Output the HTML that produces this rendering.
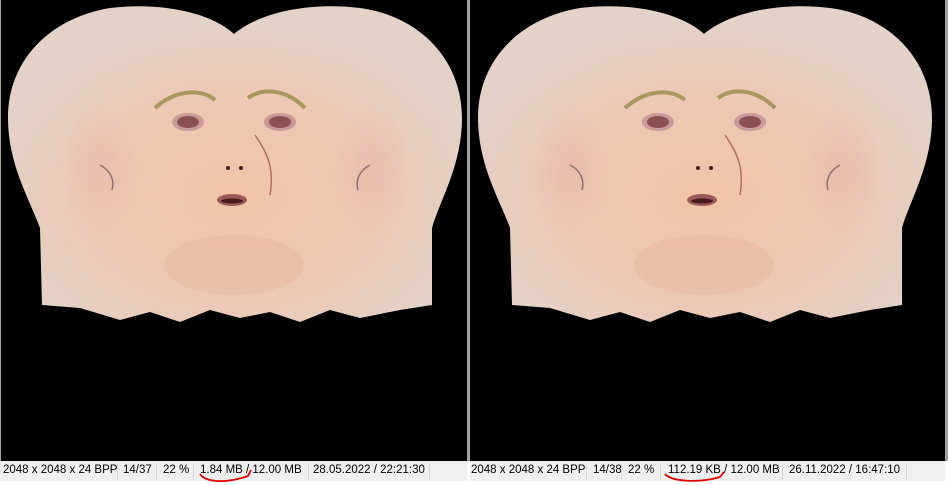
<!DOCTYPE html>
<html><head><meta charset="utf-8"><style>
body{margin:0;width:948px;height:485px;overflow:hidden;background:#fff;position:relative;font-family:"Liberation Sans",sans-serif;}
.panel{position:absolute;top:0;height:461px;background:#000;}
.sb{position:absolute;top:461px;height:20px;background:#f0f0f0;font-size:11.5px;color:#000;}
.sb span{position:absolute;top:3px;white-space:nowrap;}
.sep{position:absolute;top:2px;width:1px;height:17px;background:#d8d8d8;}
</style></head><body>
<div style="position:absolute;left:0;top:0;width:948px;height:461px;background:#a0a0a0"></div>
<div class="panel" style="left:1px;width:466px"></div>
<div class="panel" style="left:470px;width:475px"></div>
<svg width="948" height="461" style="position:absolute;left:0;top:0">
<defs>
<radialGradient id="g" cx="0.5" cy="0.6" r="0.55">
<stop offset="0" stop-color="#f2c4a8"/><stop offset="0.6" stop-color="#edc8b4"/><stop offset="1" stop-color="#e2d2c8"/>
</radialGradient>
<radialGradient id="ch" cx="0.5" cy="0.5" r="0.5"><stop offset="0" stop-color="#e8b0a8" stop-opacity="0.5"/><stop offset="1" stop-color="#e8b0a8" stop-opacity="0"/></radialGradient>
<g id="face">
<path d="M8,118 C8,60 50,18 110,8 C160,2 210,12 234,34 C260,12 310,2 360,8 C420,16 462,60 462,118 C462,165 440,200 432,228 L432,305 L400,310 L360,318 L330,310 L300,322 L270,312 L240,318 L210,310 L180,322 L150,312 L120,320 L80,308 L42,305 L40,228 C30,200 8,165 8,118Z" fill="url(#g)"/>
<ellipse cx="100" cy="170" rx="40" ry="65" fill="url(#ch)"/>
<ellipse cx="372" cy="170" rx="40" ry="65" fill="url(#ch)"/>
<ellipse cx="234" cy="265" rx="70" ry="30" fill="#e0a890" opacity="0.25"/>
<path d="M155,108 C175,90 200,88 215,100" stroke="#a89860" stroke-width="4" fill="none"/>
<path d="M248,98 C262,88 285,88 305,108" stroke="#a89860" stroke-width="4" fill="none"/>
<ellipse cx="188" cy="122" rx="16" ry="9" fill="#c99a98"/><ellipse cx="188" cy="122" rx="11" ry="6" fill="#8a5050"/>
<ellipse cx="280" cy="122" rx="16" ry="9" fill="#c99a98"/><ellipse cx="280" cy="122" rx="11" ry="6" fill="#8a5050"/>
<path d="M255,135 C265,150 275,165 270,195" stroke="#b07060" stroke-width="1.5" fill="none"/>
<circle cx="228" cy="168" r="2" fill="#402020"/><circle cx="241" cy="168" r="2" fill="#402020"/>
<ellipse cx="232" cy="200" rx="15" ry="6" fill="#9a5a58"/><ellipse cx="232" cy="201" rx="11" ry="2.5" fill="#4a1a1a"/>
<path d="M100,165 C110,170 115,180 112,190" stroke="#907070" stroke-width="1.5" fill="none"/>
<path d="M370,165 C360,170 355,180 358,190" stroke="#907070" stroke-width="1.5" fill="none"/>
</g></defs>
<use href="#face"/>
<use href="#face" x="470"/>
</svg>
<div class="sb" style="left:0;width:467px">
<span style="left:3px">2048 x 2048 x 24 BPP</span><div class="sep" style="left:117px"></div>
<span style="left:123px">14/37</span><div class="sep" style="left:156px"></div>
<span style="left:163px">22 %</span><div class="sep" style="left:193px"></div>
<span style="left:200px">1.84 MB / 12.00 MB</span><div class="sep" style="left:308px"></div>
<span style="left:313px">28.05.2022 / 22:21:30</span><div class="sep" style="left:429px"></div>
</div>
<div class="sb" style="left:470px;width:475px">
<span style="left:1px">2048 x 2048 x 24 BPP</span><div class="sep" style="left:116px"></div>
<span style="left:123px">14/38</span><div class="sep" style="left:151px"></div>
<span style="left:158px">22 %</span><div class="sep" style="left:190px"></div>
<span style="left:198px">112.19 KB / 12.00 MB</span><div class="sep" style="left:312px"></div>
<span style="left:319px">26.11.2022 / 16:47:10</span><div class="sep" style="left:436px"></div>
</div>
<svg width="948" height="485" style="position:absolute;left:0;top:0">
<path d="M200,474 C205,482 225,484 248,476 L251,470" stroke="#e00000" stroke-width="1.8" fill="none"/>
<path d="M665,474 C672,482 700,483 720,477 L724,472" stroke="#e00000" stroke-width="1.8" fill="none"/>
</svg>
</body></html>
